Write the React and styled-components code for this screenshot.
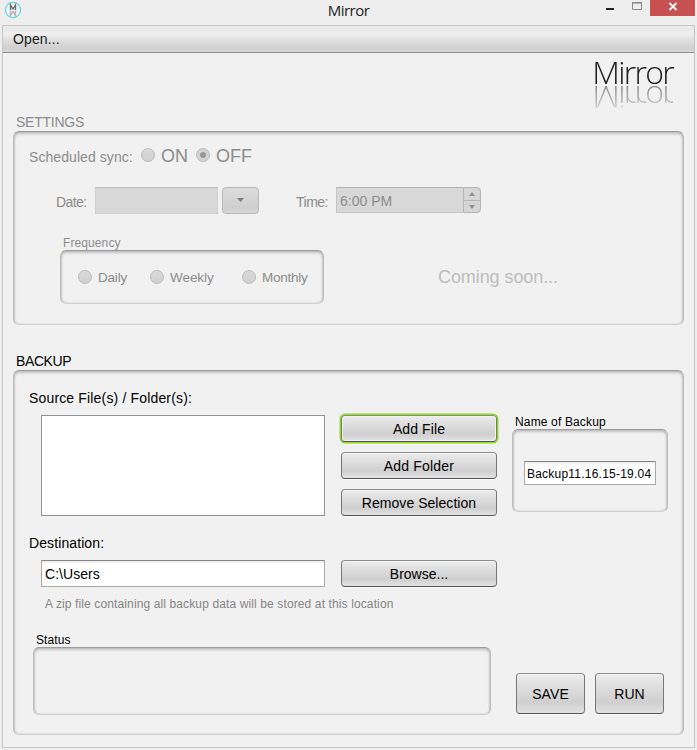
import React from "react";
import styled, { createGlobalStyle } from "styled-components";

const Global = createGlobalStyle`
  * { box-sizing: border-box; }
  body { margin: 0; background: #eeeeee; font-family: "Liberation Sans", Arial, sans-serif; }
  button, input { font-family: inherit; margin: 0; }
`;

const Window = styled.div`
  width: 697px;
  height: 750px;
  display: flex;
  flex-direction: column;
  background: #eeeeee;
  overflow: hidden;
`;

const TitleBar = styled.header`
  height: 25px;
  flex: none;
  display: grid;
  grid-template-columns: 98px 1fr 98px;
  align-items: start;
`;

const AppIcon = styled.svg`
  width: 18px;
  height: 18px;
  margin: 1px 0 0 4px;
`;

const Title = styled.div`
  font: 15px/21px "Open Sans", sans-serif;
  letter-spacing: -0.5px;
  text-align: center;
  color: #222;
`;

const WindowControls = styled.div`
  display: flex;
  justify-content: flex-end;
  padding-right: 2px;
`;

const Control = styled.svg`
  height: 16px;
  width: ${(p) => p.$w}px;
  background: ${(p) => p.$bg || "transparent"};
`;

const Frame = styled.main`
  width: 693px;
  height: 723px;
  margin-left: 2px;
  border: 1px solid #c6c6c6;
  background: #f1f1f1;
`;

const MenuBar = styled.nav`
  height: 27px;
  padding-left: 10px;
  display: flex;
  align-items: center;
  background: linear-gradient(#ededed 0%, #e8e8e8 12%, #f0f0f0 28%, #e2e2e2 50%, #d2d2d2 80%, #d2d2d2 90%, #d9d9d9 100%);
  border-bottom: 1px solid #8f8f8f;
`;

const Text = styled.span`
  display: block;
  white-space: pre;
  font-size: ${(p) => p.$size || 14}px;
  line-height: ${(p) => p.$lh || 18}px;
  letter-spacing: ${(p) => p.$ls || 0}px;
  color: ${(p) => p.$color || "#000"};
  width: ${(p) => (p.$w ? p.$w + "px" : "auto")};
  margin-left: ${(p) => p.$ml || 0}px;
  padding-top: ${(p) => p.$pt || 0}px;
`;

const LogoArea = styled.div`
  height: 60px;
  display: flex;
  justify-content: flex-end;
  padding: 8px 21px 0 0;
`;

const Logo = styled.div`
  font: 300 32px/22px "Open Sans", sans-serif;
  letter-spacing: -1.7px;
  height: 24px;
  color: #1c1c1c;
  -webkit-box-reflect: below 0 linear-gradient(transparent 0%, rgba(0, 0, 0, 0.2) 15%, rgba(0, 0, 0, 0.48) 100%);
`;

const Section = styled.section`
  margin: ${(p) => p.$top}px 0 0 10px;
  width: 671px;
`;

const GroupLabel = styled.div`
  height: 18px;
  padding-left: 3px;
`;

const GroupBox = styled.div`
  width: ${(p) => p.$w}px;
  height: ${(p) => p.$h}px;
  border: 1px solid;
  border-color: #9c9c9c #bcbcbc #d0d0d0 #bcbcbc;
  border-radius: 6px;
  box-shadow: inset 0 2px 3px rgba(0, 0, 0, 0.19), inset 1px 0 2px rgba(0, 0, 0, 0.1), inset -1px 0 2px rgba(0, 0, 0, 0.1);
  padding: ${(p) => p.$pad || "0"};
`;

const Row = styled.div`
  display: flex;
  align-items: ${(p) => p.$align || "center"};
  height: ${(p) => p.$h}px;
  margin-top: ${(p) => p.$top || 0}px;
  padding-left: ${(p) => p.$left || 0}px;
`;

const Column = styled.div`
  display: flex;
  flex-direction: column;
  gap: ${(p) => p.$gap || 0}px;
  margin-left: ${(p) => p.$left || 0}px;
`;

const Radio = styled.span`
  width: 14px;
  height: 14px;
  flex: none;
  border-radius: 50%;
  border: 1px solid #bbb;
  background: ${(p) =>
    p.$on
      ? "radial-gradient(circle, #989898 0 2.5px, #d3d3d3 3.5px)"
      : "linear-gradient(#dadada, #d0d0d0)"};
  margin-right: 6px;
  position: relative;
  top: ${(p) => p.$dy || 0}px;
`;

const DateField = styled.div`
  width: 123px;
  height: 27px;
  background: #d8d8d8;
  border: 1px solid #d0d0d0;
  border-top-color: #bdbdbd;
`;

const DropButton = styled.button`
  width: 37px;
  height: 27px;
  margin-left: 4px;
  padding: 0 0 1px;
  display: grid;
  place-items: center;
  border: 1px solid #b9b9b9;
  border-radius: 4px;
  background: linear-gradient(#dcdcdc, #cfcfcf 80%, #d8d8d8);
`;

const Spinner = styled.div`
  display: grid;
  grid-template-columns: 127px 18px;
  width: 145px;
  height: 26px;
  align-self: flex-start;
`;

const SpinnerValue = styled.div`
  border: 1px solid #c5c5c5;
  border-top-color: #b2b2b2;
  border-right: 0;
  background: #d8d8d8;
  padding: 4px 0 0 3px;
`;

const SpinnerArrows = styled.div`
  display: grid;
  grid-template-rows: 1fr 1fr;
  border: 1px solid #b5b5b5;
  border-radius: 0 4px 4px 0;
  background: #d6d6d6;
`;

const Arrow = styled.span`
  display: grid;
  place-items: center;
  & + & { border-top: 1px solid #b5b5b5; }
`;

const ListBox = styled.div`
  width: 284px;
  height: 101px;
  background: #fff;
  border: 1px solid #929292;
`;

const Input = styled.input`
  width: ${(p) => p.$w}px;
  height: ${(p) => p.$h}px;
  padding: ${(p) => p.$pad || "0 3px"};
  border: 1px solid #a9a9a9;
  border-top-color: #858585;
  border-radius: 0;
  outline: 0;
  background: linear-gradient(#e8e8e8, #fff 3px);
  color: #000;
  font-size: ${(p) => p.$size}px;
  letter-spacing: ${(p) => p.$ls || 0}px;
`;

const Button = styled.button`
  width: ${(p) => p.$w || 156}px;
  height: ${(p) => p.$h || 27}px;
  flex: none;
  padding: ${(p) => (p.$h ? 0 : "1px 0 0")};
  border: 1px solid;
  border-color: #8c8c8c #777 #555 #777;
  border-radius: 4px;
  background: linear-gradient(#efefef 0%, #e3e3e3 20%, #d8d8d8 50%, #cfcfcf 72%, #e2e2e2 100%);
  color: #000;
  font-size: 14px;
  letter-spacing: ${(p) => p.$ls || 0}px;
  box-shadow: ${(p) => (p.$focus ? "0 0 0 1.5px #90dc1c, inset 0 0 0 1px #f1f1f1" : "inset 0 1px 0 #f4f4f4, 0 1px 0 #fafafa")};
`;

const Triangle = ({ up, w = 6, h = 4, color = "#929292" }) => (
  <svg width={w} height={h} viewBox="0 0 6 4" preserveAspectRatio="none">
    <path d={up ? "M0 4L3 0L6 4Z" : "M0 0H6L3 4Z"} fill={color} />
  </svg>
);

const GRAY = "#8c8c8c";

export default function App() {
  return (
    <Window>
      <Global />
      <TitleBar>
        <AppIcon viewBox="0 0 18 18">
          <circle cx="9" cy="9" r="7.6" fill="#eff4f4" stroke="#5fd9e6" strokeWidth="1.2" />
          <path d="M6.5 9V4L9 8L11.5 4V9" fill="none" stroke="#6c6c6c" strokeWidth="1.4" />
          <path d="M6.5 9.5V14.5L9 10.5L11.5 14.5V9.5" fill="none" stroke="#b4b4b4" strokeWidth="1.4" />
        </AppIcon>
        <Title>Mirror</Title>
        <WindowControls>
          <Control $w={24}><path d="M6 8H14V10H6Z" fill="#222" /></Control>
          <Control $w={26}><path d="M8.5 2.5H17.5V9.5H8.5Z" fill="none" stroke="#8b8b8b" /><path d="M8 2.8H18" stroke="#8b8b8b" strokeWidth="1.6" /></Control>
          <Control $w={45} $bg="#c75050"><path d="M19.5 3L26.5 10M26.5 3L19.5 10" stroke="#fff" strokeWidth="1.8" /></Control>
        </WindowControls>
      </TitleBar>

      <Frame>
        <MenuBar><Text $ls={0.1} $color="#1c1c1c">Open...</Text></MenuBar>
        <LogoArea><Logo>Mirror</Logo></LogoArea>

        <Section $top={0}>
          <GroupLabel><Text $ls={-0.25} $color={GRAY}>SETTINGS</Text></GroupLabel>
          <GroupBox $w={671} $h={194} $pad="14px 0 0 15px">
            <Row $h={20}>
              <Text $pt={2} $ls={0.07} $color={GRAY} $w={112}>Scheduled sync:</Text>
              <Radio $dy={-1} />
              <Text $size={18} $color={GRAY} $w={35}>ON</Text>
              <Radio $on $dy={-1} />
              <Text $size={18} $color={GRAY}>OFF</Text>
            </Row>
            <Row $h={27} $top={21} $left={27}>
              <Text $pt={2} $size={14} $ls={-0.6} $color={GRAY} $w={39}>Date:</Text>
              <DateField />
              <DropButton aria-label="Choose date"><Triangle w={7} h={4} color="#7d7d7d" /></DropButton>
              <Text $pt={2} $size={14} $ls={-0.5} $color={GRAY} $ml={37} $w={40}>Time:</Text>
              <Spinner>
                <SpinnerValue><Text $color={GRAY}>6:00 PM</Text></SpinnerValue>
                <SpinnerArrows>
                  <Arrow><Triangle up w={6} h={4} /></Arrow>
                  <Arrow><Triangle w={6} h={4} /></Arrow>
                </SpinnerArrows>
              </Spinner>
            </Row>
            <Row $h={68} $top={22} $left={31} $align="flex-start">
              <Column>
                <Text $size={12} $lh={14} $ls={0.1} $color={GRAY} $ml={3}>Frequency</Text>
                <GroupBox $w={264} $h={54} $pad="17px 0 0 17px">
                  <Row $h={18}>
                    <Radio /><Text $size={13.5} $ls={-0.2} $pt={2} $color={GRAY} $w={52}>Daily</Text>
                    <Radio /><Text $size={13.5} $pt={2} $ls={-0.05} $color={GRAY} $w={72}>Weekly</Text>
                    <Radio /><Text $size={13.5} $ls={-0.25} $pt={2} $color={GRAY}>Monthly</Text>
                  </Row>
                </GroupBox>
              </Column>
              <Column $left={114}>
                <Text $size={18} $lh={82} $ls={-0.08} $color="#bdbdbd">Coming soon...</Text>
              </Column>
            </Row>
          </GroupBox>
        </Section>

        <Section $top={27}>
          <GroupLabel><Text $ls={-0.4}>BACKUP</Text></GroupLabel>
          <GroupBox $w={671} $h={365} $pad="18px 0 0 15px">
            <Text $ls={0.16}>Source File(s) / Folder(s):</Text>
            <Row $h={101} $top={8} $left={12} $align="flex-start">
              <ListBox />
              <Column $gap={10} $left={16}>
                <Button $focus $ls={0.1}>Add File</Button>
                <Button $ls={0.18}>Add Folder</Button>
                <Button $ls={0.04}>Remove Selection</Button>
              </Column>
              <Column $left={15}>
                <Text $size={12} $lh={14} $ls={0.15} $ml={3}>Name of Backup</Text>
                <GroupBox $w={156} $h={83} $pad="31px 0 0 11px">
                  <Input $w={132} $h={24} $size={12} $ls={0.22} $pad="1px 0 0 2px" aria-label="Name of Backup" readOnly value="Backup11.16.15-19.04" />
                </GroupBox>
              </Column>
            </Row>
            <Row $h={18} $top={18}><Text $ls={0.1}>Destination:</Text></Row>
            <Row $h={27} $top={8} $left={12}>
              <Input $w={284} $h={27} $size={14} $ls={0.05} aria-label="Destination" readOnly value="C:\Users" />
              <Column $left={16}><Button>Browse...</Button></Column>
            </Row>
            <Row $h={16} $top={9} $left={16}>
              <Text $size={12} $ls={0.12} $color="#858585">A zip file containing all backup data will be stored at this location</Text>
            </Row>
            <Row $h={83} $top={20} $left={4} $align="flex-end">
              <Column>
                <Text $size={12} $lh={14} $ml={3} $ls={0.1}>Status</Text>
                <GroupBox $w={458} $h={68} />
              </Column>
              <Row $h={43} $left={25}>
                <Button $w={69} $h={41} $ls={0.1}>SAVE</Button>
                <Column $left={10}><Button $w={69} $h={41}>RUN</Button></Column>
              </Row>
            </Row>
          </GroupBox>
        </Section>
      </Frame>
    </Window>
  );
}
